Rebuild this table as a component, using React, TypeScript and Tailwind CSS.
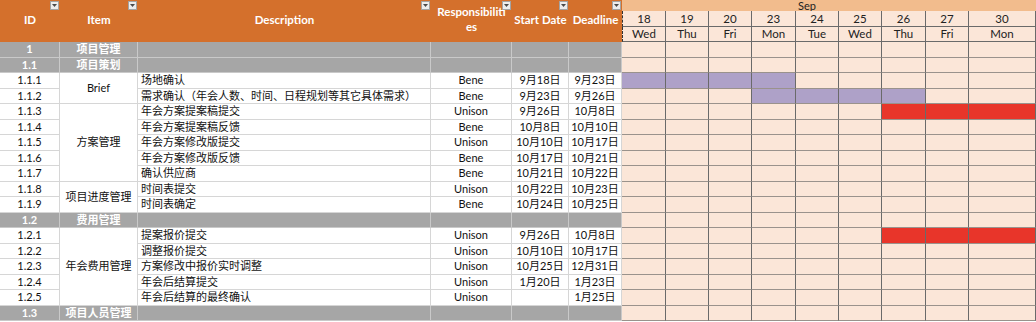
import React from 'react';

type Row = {
  section?: boolean;
  id: string;
  item?: string;
  span?: 2 | 5;
  desc?: string;
  resp?: string;
  start?: string;
  end?: string;
  bar?: { from: number; to: number; color: 'purple' | 'red' };
};

const rows: Row[] = [
  { section: true, id: '1', item: '项目管理' },
  { section: true, id: '1.1', item: '项目策划' },
  { id: '1.1.1', item: 'Brief', span: 2, desc: '场地确认', resp: 'Bene', start: '9月18日', end: '9月23日', bar: { from: 0, to: 3, color: 'purple' } },
  { id: '1.1.2', desc: '需求确认（年会人数、时间、日程规划等其它具体需求）', resp: 'Bene', start: '9月23日', end: '9月26日', bar: { from: 3, to: 6, color: 'purple' } },
  { id: '1.1.3', item: '方案管理', span: 5, desc: '年会方案提案稿提交', resp: 'Unison', start: '9月26日', end: '10月8日', bar: { from: 6, to: 8, color: 'red' } },
  { id: '1.1.4', desc: '年会方案提案稿反馈', resp: 'Bene', start: '10月8日', end: '10月10日' },
  { id: '1.1.5', desc: '年会方案修改版提交', resp: 'Unison', start: '10月10日', end: '10月17日' },
  { id: '1.1.6', desc: '年会方案修改版反馈', resp: 'Bene', start: '10月17日', end: '10月21日' },
  { id: '1.1.7', desc: '确认供应商', resp: 'Bene', start: '10月21日', end: '10月22日' },
  { id: '1.1.8', item: '项目进度管理', span: 2, desc: '时间表提交', resp: 'Unison', start: '10月22日', end: '10月23日' },
  { id: '1.1.9', desc: '时间表确定', resp: 'Bene', start: '10月24日', end: '10月25日' },
  { section: true, id: '1.2', item: '费用管理' },
  { id: '1.2.1', item: '年会费用管理', span: 5, desc: '提案报价提交', resp: 'Unison', start: '9月26日', end: '10月8日', bar: { from: 6, to: 8, color: 'red' } },
  { id: '1.2.2', desc: '调整报价提交', resp: 'Unison', start: '10月10日', end: '10月17日' },
  { id: '1.2.3', desc: '方案修改中报价实时调整', resp: 'Unison', start: '10月25日', end: '12月31日' },
  { id: '1.2.4', desc: '年会后结算提交', resp: 'Unison', start: '1月20日', end: '1月23日' },
  { id: '1.2.5', desc: '年会后结算的最终确认', resp: 'Unison', start: '', end: '1月25日' },
  { section: true, id: '1.3', item: '项目人员管理' },
];

const days = [
  { d: '18', w: 'Wed' },
  { d: '19', w: 'Thu' },
  { d: '20', w: 'Fri' },
  { d: '23', w: 'Mon' },
  { d: '24', w: 'Tue' },
  { d: '25', w: 'Wed' },
  { d: '26', w: 'Thu' },
  { d: '27', w: 'Fri' },
  { d: '30', w: 'Mon' },
];

const COLS = 'grid grid-cols-[60px_78px_293px_81px_57px_53px_44px_43px_43px_44px_43px_43px_44px_43px_67px]';

const Filter = () => (
  <span className="absolute right-[1px] top-[1px] flex h-[9px] w-[9px] items-center justify-center border border-[#a3a3a3] bg-[#ededed]">
    <svg width="5" height="3" viewBox="0 0 5 3">
      <path d="M0 0h5L2.5 3z" fill="#4a4a4a" />
    </svg>
  </span>
);

const HeadCell: React.FC<{ children: React.ReactNode }> = ({ children }) => (
  <div className="relative row-span-3 flex items-center justify-center bg-[#d4702c] pb-[4px] text-center text-[11.5px] font-bold leading-[15px] text-white">
    {children}
    <Filter />
  </div>
);

const cellBase = 'flex items-center border-b border-r';
const white = 'bg-white border-[#d6d6d6] text-[#111]';
const gray = 'bg-[#a6a6a6] border-[#c9c9c9] text-white font-bold';

const GanttCells: React.FC<{ bar?: Row['bar'] }> = ({ bar }) => (
  <>
    {days.map((_, i) => {
      const on = bar && i >= bar.from && i <= bar.to;
      const bg = on ? (bar!.color === 'purple' ? 'bg-[#aea1c8]' : 'bg-[#e8352a]') : 'bg-[#fbe6d8]';
      return <div key={i} className={`border-b border-r border-b-[#9a928c] border-r-[#6a6a6a] ${bg}`} />;
    })}
  </>
);

export default function App() {
  return (
    <div className="h-[322px] w-[1036px] overflow-hidden bg-white font-['Lato','Noto_Sans_CJK_SC',sans-serif] text-[11px]">
      {/* header */}
      <div className={`${COLS} grid-rows-[11px_16px_15px]`}>
        <HeadCell>ID</HeadCell>
        <HeadCell>Item</HeadCell>
        <HeadCell>Description</HeadCell>
        <HeadCell>
          <span className="whitespace-nowrap">
            Responsibiliti
            <br />
            es
          </span>
        </HeadCell>
        <HeadCell>
          <span className="whitespace-nowrap">Start Date</span>
        </HeadCell>
        <HeadCell>
          <span className="whitespace-nowrap">Deadline</span>
        </HeadCell>
        <div className="col-span-9 flex items-center bg-[#f2bc8d] pl-[176px] text-[11px] leading-none text-[#222]">Sep</div>
        {days.map((d, i) => (
          <div
            key={d.d}
            className={`flex items-center justify-center border-b border-r border-[#6a6a6a] bg-[#fbe6d8] text-[11.5px] leading-none text-[#222] ${i === 0 ? 'border-l border-l-[#333] [border-left-style:dashed]' : ''}`}
          >
            {d.d}
          </div>
        ))}
        {days.map((d, i) => (
          <div
            key={d.w + i}
            className={`flex items-center justify-center border-b border-r border-[#6a6a6a] bg-[#fbe6d8] text-[11.5px] leading-none text-[#222] ${i === 0 ? 'border-l border-l-[#333] [border-left-style:dashed]' : ''}`}
          >
            {d.w}
          </div>
        ))}
      </div>

      {/* body */}
      <div className={`${COLS} grid-rows-[16px_15px_16px_15px_16px_15px_16px_15px_16px_15px_16px_15px_16px_15px_16px_15px_16px_15px]`}>
        {rows.map((r) =>
          r.section ? (
            <React.Fragment key={r.id}>
              <div className={`${cellBase} ${gray} justify-center`}>{r.id}</div>
              <div className={`${cellBase} ${gray} justify-center whitespace-nowrap`}>{r.item}</div>
              <div className={`${cellBase} ${gray}`} />
              <div className={`${cellBase} ${gray}`} />
              <div className={`${cellBase} ${gray}`} />
              <div className={`${cellBase} ${gray}`} />
              <GanttCells />
            </React.Fragment>
          ) : (
            <React.Fragment key={r.id}>
              <div className={`${cellBase} ${white} justify-center`}>{r.id}</div>
              {r.item && (
                <div className={`${cellBase} ${white} justify-center whitespace-nowrap ${r.span === 5 ? 'row-span-5' : 'row-span-2'}`}>
                  {r.item}
                </div>
              )}
              <div className={`${cellBase} ${white} whitespace-nowrap pl-[3px]`}>{r.desc}</div>
              <div className={`${cellBase} ${white} justify-center`}>{r.resp}</div>
              <div className={`${cellBase} ${white} justify-center whitespace-nowrap`}>{r.start}</div>
              <div className={`${cellBase} ${white} justify-center whitespace-nowrap`}>{r.end}</div>
              <GanttCells bar={r.bar} />
            </React.Fragment>
          )
        )}
      </div>
    </div>
  );
}
